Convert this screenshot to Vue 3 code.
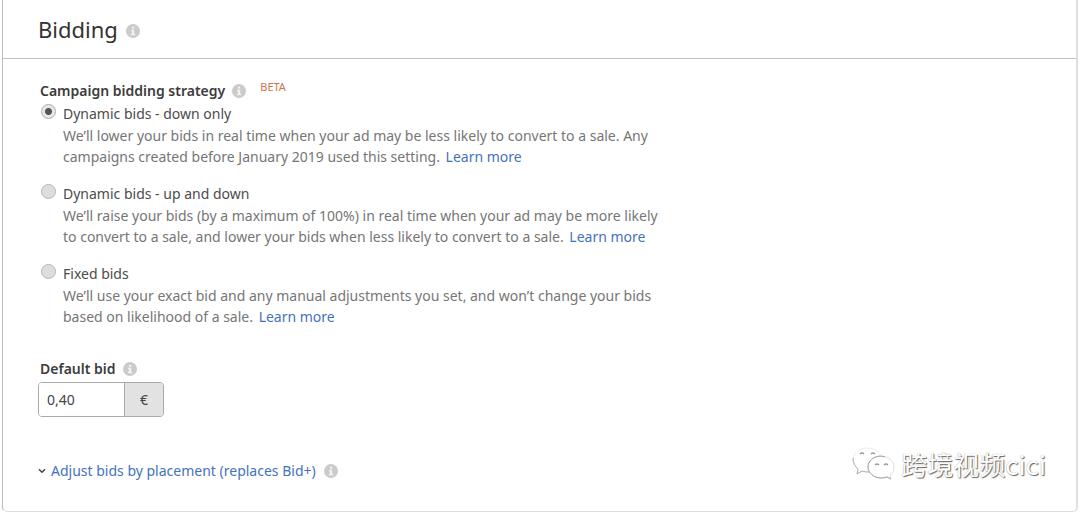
<script setup>
import { h, ref } from 'vue'

const strategy = ref('down')
const bid = ref('0,40')

const options = [
  {
    id: 'down',
    title: 'Dynamic bids - down only',
    text: 'We’ll lower your bids in real time when your ad may be less likely to convert to a sale. Any campaigns created before January 2019 used this setting.',
  },
  {
    id: 'updown',
    title: 'Dynamic bids - up and down',
    text: 'We’ll raise your bids (by a maximum of 100%) in real time when your ad may be more likely to convert to a sale, and lower your bids when less likely to convert to a sale.',
  },
  {
    id: 'fixed',
    title: 'Fixed bids',
    text: 'We’ll use your exact bid and any manual adjustments you set, and won’t change your bids based on likelihood of a sale.',
  },
]

const InfoIcon = () =>
  h('svg', { width: 14, height: 14, viewBox: '0 0 14 14', 'aria-hidden': 'true' }, [
    h('circle', { cx: 7, cy: 7, r: 7, fill: '#cbcbcb' }),
    h('path', { d: 'M6 2.8h2.2v1.9H6zM5 5.8h3.2v4H9.3v1.4H4.9V9.8H6V7.2H5z', fill: '#f2f2f2' }),
  ])
</script>

<template>
  <main class="page">
    <section class="panel">
      <header class="head">
        <h1>Bidding</h1>
        <InfoIcon class="info" />
      </header>
      <div class="body">
        <fieldset class="strategies">
          <legend class="label">
            <span>Campaign bidding strategy</span>
            <InfoIcon />
            <span class="beta">BETA</span>
          </legend>
          <div v-for="o in options" :key="o.id" class="option">
            <input :id="o.id" v-model="strategy" type="radio" name="strategy" :value="o.id" />
            <div>
              <label :for="o.id">{{ o.title }}</label>
              <p>{{ o.text }} <a href="#">Learn more</a></p>
            </div>
          </div>
        </fieldset>

        <div class="bid">
          <div class="label">
            <label for="bid">Default bid</label>
            <InfoIcon />
          </div>
          <div class="field">
            <input id="bid" v-model="bid" type="text" />
            <span class="unit">€</span>
          </div>
        </div>

        <div class="adjust">
          <svg width="8" height="6" viewBox="0 0 8 6" aria-hidden="true">
            <path d="M1 1.2 4 4.2 7 1.2" fill="none" stroke="#444" stroke-width="1.5" />
          </svg>
          <a href="#">Adjust bids by placement (replaces Bid+)</a>
          <InfoIcon class="info" />
        </div>
      </div>
    </section>

    <div class="watermark">
      <svg width="44" height="36" viewBox="0 0 44 36" aria-hidden="true">
        <path d="M16 2C8 2 2 7 2 14c0 4 2 7 5 9l-1 5 5-3c2 .7 4 1 7 1 7 0 13-5 13-12S24 2 16 2z" fill="#fff" stroke="#ececec" />
        <path d="M2 12c0 5 2 8 5 11l-1 5 5-3c2 .7 4 1 7 1" fill="none" stroke="#b0b0b0" />
        <path d="M30 10c-7 0-13 5-13 11s6 11 13 11c2 0 4-.4 6-1l4 2-1-4c3-2 4-5 4-8 0-6-6-11-13-11z" fill="#fff" stroke="#dedede" />
        <path d="M34 11c-8-3-17 2-17 10 0 6 6 11 13 11 2 0 4-.4 6-1l4 2" fill="none" stroke="#a4a4a4" />
        <path d="M9 8q2-2 4 0M20 8q2-2 4 0M24 19q2-2 4 0M33 19q2-2 4 0" fill="none" stroke="#999" stroke-width="1.3" />
      </svg>
      <span>跨境视频cici</span>
    </div>
  </main>
</template>

<style>
body {
  margin: 0;
  background: #fff;
}
</style>

<style scoped>
.page {
  position: relative;
  padding: 0 2px;
  font: 14px/21px "Noto Sans", "Open Sans", sans-serif;
  color: #4c4c4c;
}
.panel {
  box-sizing: border-box;
  min-height: 100vh;
  border: 2px solid #dedede;
  border-top: 0;
  border-left: 1px solid #bbb;
  border-bottom-width: 1px;
  border-radius: 0 0 5px 5px;
}
.head {
  display: flex;
  align-items: center;
  gap: 8px;
  height: 58px;
  padding-left: 35px;
  border-bottom: 1px solid #c2c2c2;
}
h1 {
  margin: 0;
  font-size: 22px;
  line-height: 30px;
  font-weight: 400;
  color: #333;
}
.head .info {
  margin-top: 4px;
}
.body {
  padding: 21px 35px 0;
}
.strategies {
  margin: 0;
  padding: 0;
  border: 0;
  min-width: 0;
}
.label {
  display: flex;
  align-items: center;
  gap: 7px;
  padding: 0 0 0 2px;
  font-weight: 600;
  color: #3c3c3c;
}
.beta {
  margin: 0 0 8px 7px;
  font-size: 11px;
  line-height: 13px;
  font-weight: 400;
  color: #d0734a;
}
.option {
  display: flex;
  gap: 7px;
  margin: 2px 0 16px 3px;
  max-width: 632px;
}
.option label {
  display: block;
}
.option p {
  margin: 1px 0 0;
  color: #767676;
}
.option p a {
  margin-left: 2px;
}
.option input {
  appearance: none;
  flex: none;
  box-sizing: border-box;
  width: 15px;
  height: 15px;
  margin: 1px 0 0;
  border: 1px solid #b4b4b4;
  border-radius: 50%;
  background: #dedede;
}
.option input:checked {
  border-color: #aaa;
  background: radial-gradient(circle, #555 0 3px, #e8e8e8 4px);
}
a {
  color: #4472bd;
  text-decoration: none;
}
.bid {
  margin-top: 15px;
}
.field {
  display: flex;
  box-sizing: border-box;
  width: 126px;
  height: 35px;
  margin-top: 3px;
  border: 1px solid #aaa;
  border-radius: 4px;
  overflow: hidden;
  color: #444;
}
.field input {
  flex: 1;
  min-width: 0;
  padding: 0 8px;
  border: 0;
  font: inherit;
  color: inherit;
  background: #fff;
}
.unit {
  width: 38px;
  border-left: 1px solid #aaa;
  background: #e2e2e2;
  line-height: 33px;
  text-align: center;
}
.adjust {
  display: flex;
  align-items: center;
  gap: 5px;
  margin-top: 43px;
}
.adjust .info {
  margin-left: 3px;
}
.watermark {
  position: absolute;
  right: 34px;
  bottom: 30px;
  display: flex;
  align-items: center;
  gap: 6px;
  font: 26px/36px "Noto Sans CJK SC", sans-serif;
  color: #fff;
  text-shadow: 1px 1px 1px #666, 0 0 1px #999;
}
</style>
